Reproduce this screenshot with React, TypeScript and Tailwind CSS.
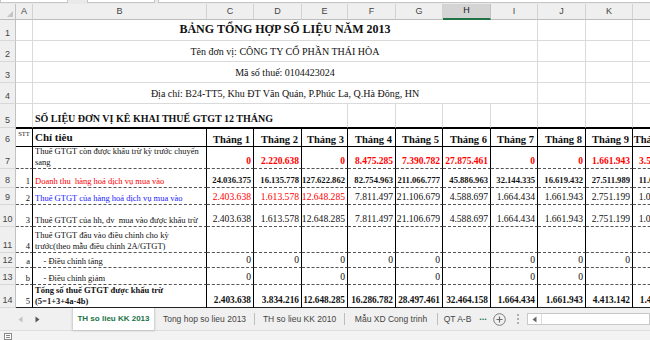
import React from 'react';

const SERIF = "font-['Liberation_Serif','Times_New_Roman',serif]";
const SANS = "font-['Liberation_Sans',Arial,sans-serif]";
const GRID = 'grid grid-cols-[16px_17px_174px_47px_48px_46px_48px_47px_48px_47px_48px_47px_47px]';

const letters = ['A', 'B', 'C', 'D', 'E', 'F', 'G', 'H', 'I', 'J', 'K', 'L'];

function RH({ n }: { n: number }) {
  return (
    <div className={`bg-[#efefef] border-r border-r-[#c2c2c2] border-b border-b-[#d8d8d8] flex items-end justify-center pb-[2px] text-[9px] leading-[10px] text-[#444] ${SANS}`}>
      {n}
    </div>
  );
}

function G({ children, cls = '' }: { children?: React.ReactNode; cls?: string }) {
  return <div className={`border-r border-r-[#dadada] border-b border-b-[#dadada] ${cls}`}>{children}</div>;
}

type TRow = {
  n: number;
  h: string;
  a: string;
  b: React.ReactNode;
  bCls: string;
  vals: string[];
  vCls: string;
  colors?: string[];
  bottom: string;
};

const DASH = 'border-b-[#555] [border-bottom-style:dashed]';

const rows: TRow[] = [
  {
    n: 7,
    h: 'h-[24px]',
    a: '',
    b: (
      <>
        Thuế GTGT còn được khấu trừ kỳ trước chuyển
        <br />
        sang
      </>
    ),
    bCls: 'text-[#111]',
    vals: ['0', '2.220.638', '0', '8.475.285', '7.390.782', '27.875.461', '0', '0', '1.661.943', '3.518.214'],
    vCls: 'font-bold text-[9.5px] text-[#ff0000]',
    bottom: DASH,
  },
  {
    n: 8,
    h: 'h-[19px]',
    a: '1',
    b: 'Doanh thu  hàng hoá dịch vụ mua vào',
    bCls: 'text-[#ff0000]',
    vals: ['24.036.375', '16.135.778', '127.622.862', '82.754.963', '211.066.777', '45.886.963', '32.144.335', '16.619.432', '27.511.989', '11.094.521'],
    vCls: 'font-bold text-[8.6px] text-[#111]',
    bottom: DASH,
  },
  {
    n: 9,
    h: 'h-[17px]',
    a: '2',
    b: 'Thuế GTGT của hàng hoá dịch vụ mua vào',
    bCls: 'text-[#1a1aff]',
    vals: ['2.403.638', '1.613.578', '12.648.285', '7.811.497', '21.106.679', '4.588.697', '1.664.434', '1.661.943', '2.751.199', '1.009.452'],
    vCls: 'text-[9.6px]',
    colors: ['text-[#ff0000]', 'text-[#ff0000]', 'text-[#ff0000]', 'text-[#111]', 'text-[#111]', 'text-[#111]', 'text-[#111]', 'text-[#111]', 'text-[#111]', 'text-[#111]'],
    bottom: DASH,
  },
  {
    n: 10,
    h: 'h-[22px]',
    a: '3',
    b: 'Thuế GTGT của hh, dv  mua vào được khấu trừ',
    bCls: 'text-[#111]',
    vals: ['2.403.638', '1.613.578', '12.648.285', '7.811.497', '21.106.679', '4.588.697', '1.664.434', '1.661.943', '2.751.199', '1.009.452'],
    vCls: 'text-[9.6px] text-[#111]',
    bottom: DASH,
  },
  {
    n: 11,
    h: 'h-[26px]',
    a: '4',
    b: (
      <>
        Thuế GTGT đầu vào điều chỉnh cho kỳ
        <br />
        trước(theo mẫu điều chỉnh 2A/GTGT)
      </>
    ),
    bCls: 'text-[#111]',
    vals: ['', '', '', '', '', '', '', '', '', ''],
    vCls: 'text-[9.6px]',
    bottom: DASH,
  },
  {
    n: 12,
    h: 'h-[15px]',
    a: 'a',
    b: '    - Điều chỉnh tăng',
    bCls: 'text-[#111]',
    vals: ['0', '0', '0', '0', '0', '', '0', '0', '0', ''],
    vCls: 'text-[9.6px] text-[#111]',
    bottom: DASH,
  },
  {
    n: 13,
    h: 'h-[17px]',
    a: 'b',
    b: '    - Điều chỉnh giảm',
    bCls: 'text-[#111]',
    vals: ['0', '', '0', '', '0', '', '0', '0', '', ''],
    vCls: 'text-[9.6px] text-[#111]',
    bottom: DASH,
  },
  {
    n: 14,
    h: 'h-[22px]',
    a: '5',
    b: (
      <>
        Tổng số thuế GTGT được khấu trừ
        <br />
        (5=1+3+4a-4b)
      </>
    ),
    bCls: 'text-[#111] font-bold',
    vals: ['2.403.638', '3.834.216', '12.648.285', '16.286.782', '28.497.461', '32.464.158', '1.664.434', '1.661.943', '4.413.142', '1.473.908'],
    vCls: 'font-bold text-[9.3px] text-[#111]',
    bottom: 'border-b-[#222]',
  },
];

const months = ['Tháng 1', 'Tháng 2', 'Tháng 3', 'Tháng 4', 'Tháng 5', 'Tháng 6', 'Tháng 7', 'Tháng 8', 'Tháng 9', 'Tháng 10'];

function TopStrip() {
  return (
    <div className="h-[4px] bg-[#e9e9e9] flex items-start">
      <div className="w-[68px] h-[3px] bg-white border-b border-x border-[#c6c6c6]" />
      <div className="w-[19px]" />
      <div className="w-[68px] h-[3px] bg-white border-b border-x border-[#c6c6c6]" />
      <div className="w-[3px]" />
      <div className="flex-1 h-[3px] bg-white border-b border-l border-[#c6c6c6]" />
    </div>
  );
}

function ColHeader() {
  return (
    <div className={`${GRID} h-[16px] bg-[#efefef] ${SANS}`}>
      <div className="relative border-r border-r-[#c2c2c2] border-b border-b-[#bdbdbd]">
        <div className="absolute right-[2px] bottom-[2px] w-0 h-0 border-l-[6px] border-l-transparent border-b-[6px] border-b-[#c4c4c4]" />
      </div>
      {letters.map((l) =>
        l === 'H' ? (
          <div
            key={l}
            className="bg-[#d4d4d4] border-r border-r-[#c2c2c2] border-b-2 border-b-[#217346] flex items-center justify-center text-[9px] text-[#222]"
          >
            {l}
          </div>
        ) : (
          <div
            key={l}
            className="border-r border-r-[#d2d2d2] border-b border-b-[#bdbdbd] flex items-center justify-center text-[9px] text-[#444]"
          >
            {l}
          </div>
        )
      )}
    </div>
  );
}

function MergedRow({ n, children, cls }: { n: number; children: React.ReactNode; cls: string }) {
  return (
    <div className={`${GRID} h-[21px]`}>
      <RH n={n} />
      <G />
      <div className={`col-span-8 border-r border-r-[#dadada] border-b border-b-[#dadada] flex items-end justify-center pb-[2px] whitespace-nowrap ${SERIF} ${cls}`}>
        {children}
      </div>
      <G />
      <G />
      <G />
    </div>
  );
}

function Tri({ dir, color }: { dir: 'l' | 'r'; color: string }) {
  return (
    <svg width="5" height="7" viewBox="0 0 5 7">
      {dir === 'l' ? <path d="M4.5 0.5 L0.5 3.5 L4.5 6.5 Z" fill={color} /> : <path d="M0.5 0.5 L4.5 3.5 L0.5 6.5 Z" fill={color} />}
    </svg>
  );
}

function TabBar() {
  return (
    <div className={`h-[23px] flex items-stretch bg-[#f0f0f0] border-t border-t-[#c9c9c9] ${SANS}`}>
      <div className="w-[72px] flex items-center">
        <div className="w-[18px]" />
        <Tri dir="l" color="#c2c2c2" />
        <div className="w-[12px]" />
        <Tri dir="r" color="#555" />
      </div>
      <div className="w-[83px] bg-white flex items-center justify-center text-[8px] font-bold text-[#217346] border-x border-x-[#d4d4d4] shadow-[0_1px_2px_rgba(0,0,0,0.15)]">
        TH so lieu KK 2013
      </div>
      <div className="w-[99px] flex items-center justify-center text-[8.5px] text-[#444]">Tong hop so lieu 2013</div>
      <div className="w-px my-[5px] bg-[#bdbdbd]" />
      <div className="w-[89px] flex items-center justify-center text-[8.5px] text-[#444]">TH so lieu KK 2010</div>
      <div className="w-px my-[5px] bg-[#bdbdbd]" />
      <div className="w-[92px] flex items-center justify-center text-[8.5px] text-[#444]">Mẫu XD Cong trinh</div>
      <div className="w-px my-[5px] bg-[#bdbdbd]" />
      <div className="w-[39px] flex items-center justify-center text-[8.5px] text-[#444]">QT A-B</div>
      <div className="w-[12px] flex items-center justify-center text-[9px] font-bold text-[#217346] pb-[3px]">...</div>
      <div className="w-[21px] flex items-center justify-center">
        <svg width="13" height="13" viewBox="0 0 13 13">
          <circle cx="6.5" cy="6.5" r="5.8" fill="none" stroke="#7a7a7a" strokeWidth="1" />
          <path d="M6.5 3.5 V9.5 M3.5 6.5 H9.5" stroke="#666" strokeWidth="1.1" />
        </svg>
      </div>
      <div className="w-[16px] flex flex-col items-center justify-center gap-[2px]">
        <div className="w-[2px] h-[2px] bg-[#b0b0b0]" />
        <div className="w-[2px] h-[2px] bg-[#b0b0b0]" />
        <div className="w-[2px] h-[2px] bg-[#b0b0b0]" />
      </div>
      <div className="flex-1 flex items-center pl-[1px]">
        <div className="w-full h-[12px] bg-white border border-[#c9c9c9] flex items-center pl-[4px]">
          <Tri dir="l" color="#666" />
          <div className="ml-[4px] h-full border-l border-l-[#dcdcdc]" />
        </div>
      </div>
    </div>
  );
}

export default function App() {
  return (
    <div className="w-[650px] h-[340px] overflow-hidden bg-white">
      <TopStrip />
      <ColHeader />
      <MergedRow n={1} cls="text-[12px] font-bold text-[#111]">
        BẢNG TỔNG HỢP SỐ LIỆU NĂM 2013
      </MergedRow>
      <MergedRow n={2} cls="text-[10px] text-[#111]">
        Tên đơn vị: CÔNG TY CỔ PHẦN THÁI HÒA
      </MergedRow>
      <MergedRow n={3} cls="text-[10px] text-[#111]">
        Mã số thuế: 0104423024
      </MergedRow>
      <MergedRow n={4} cls="text-[10px] text-[#111]">
        Địa chỉ: B24-TT5, Khu ĐT Văn Quán, P.Phúc La, Q.Hà Đông, HN
      </MergedRow>

      {/* Row 5 */}
      <div className={`${GRID} h-[24px]`}>
        <RH n={5} />
        <div className="border-r border-r-[#dadada] border-b border-b-black" />
        <div className={`col-span-4 border-r border-r-[#dadada] border-b border-b-black flex items-end pl-[2px] pb-[1px] whitespace-nowrap text-[10px] font-bold text-[#111] ${SERIF}`}>
          SỐ LIỆU ĐƠN VỊ KÊ KHAI THUẾ GTGT 12 THÁNG
        </div>
        {[0, 1, 2, 3, 4, 5, 6].map((i) => (
          <div key={i} className="border-r border-r-[#dadada] border-b border-b-black" />
        ))}
      </div>

      {/* Row 6 header */}
      <div className={`${GRID} h-[17px] ${SERIF}`}>
        <RH n={6} />
        <div className="border-t border-t-black border-r border-r-black border-b border-b-black flex items-start justify-center pt-[1px] text-[6.5px] leading-[8px] text-[#111]">
          STT
        </div>
        <div className="border-t border-t-black border-r border-r-black border-b border-b-black flex items-center pl-[2px] text-[11px] font-bold text-[#111]">
          Chỉ tiêu
        </div>
        {months.map((m) => (
          <div
            key={m}
            className="border-t border-t-black border-r border-r-black border-b border-b-black flex items-end justify-end pr-[3px] text-[10.5px] leading-[12px] font-bold text-[#111] whitespace-nowrap"
          >
            {m}
          </div>
        ))}
      </div>

      {rows.map((r) => (
        <div key={r.n} className={`${GRID} ${r.h} ${SERIF}`}>
          <RH n={r.n} />
          <div className={`border-r border-r-black border-b ${r.bottom} flex items-end justify-end pr-[2px] pb-[1px] text-[8.5px] leading-[10px] text-[#111]`}>
            {r.a}
          </div>
          <div className={`border-r border-r-black border-b ${r.bottom} flex items-end pl-[2px] pb-[1px] text-[8.5px] leading-[10.5px] whitespace-pre ${r.bCls}`}>
            <div>{r.b}</div>
          </div>
          {r.vals.map((v, i) => (
            <div
              key={i}
              className={`border-r border-r-black border-b ${r.bottom} flex items-end justify-end pr-[2px] pb-[1px] leading-[12px] whitespace-nowrap ${r.vCls} ${r.colors ? r.colors[i] : ''}`}
            >
              {v}
            </div>
          ))}
        </div>
      ))}

      <TabBar />
      <div className="h-[10px] bg-[#f3f3f3] border-t border-t-[#dedede] flex items-start pl-[4px] pt-[2px]">
        <div className="w-[8px] h-[7px] border border-[#8a8a8a] bg-white relative">
          <div className="absolute left-[1px] top-[1px] w-[4px] h-[1px] bg-[#8a8a8a]" />
          <div className="absolute left-[1px] top-[3px] w-[4px] h-[1px] bg-[#8a8a8a]" />
        </div>
      </div>
    </div>
  );
}
